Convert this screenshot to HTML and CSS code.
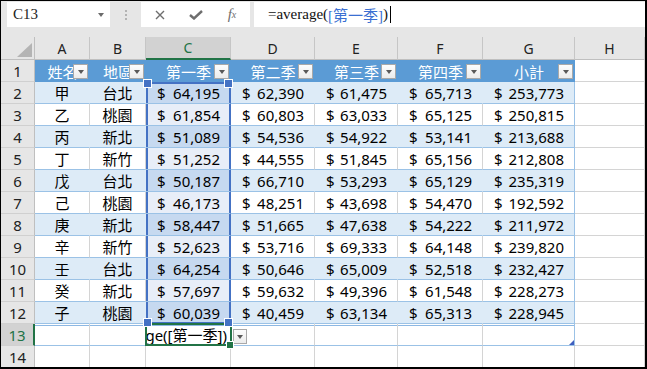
FILE: index.html
```html
<!DOCTYPE html>
<html lang="zh-Hant">
<head>
    <meta charset="UTF-8">
    <meta name="viewport" content="width=device-width, initial-scale=1.0">
    <title>季度業績表</title>
    <link rel="stylesheet" href="styles.css">
</head>
<body>
    <div class="window">
        <!-- formula bar -->
        <div class="formula-bar">
            <div class="name-box">
                <span>C13</span>
                <span class="name-arrow"></span>
            </div>
            <div class="grip">
                <svg width="2" height="10" viewBox="0 0 2 10"><rect x="0" y="0" width="2" height="2" fill="#b3b3b3"/><rect x="0" y="4" width="2" height="2" fill="#b3b3b3"/><rect x="0" y="8" width="2" height="2" fill="#b3b3b3"/></svg>
            </div>
            <div class="fx-buttons">
                <span class="fx-slot">
                    <svg width="10" height="10" viewBox="0 0 10 10"><path d="M1 1 L9 9 M9 1 L1 9" stroke="#6e6e6e" stroke-width="1.4" fill="none"/></svg>
                </span>
                <span class="fx-slot">
                    <svg width="14" height="10" viewBox="0 0 14 10"><path d="M1 5 L5 8.5 L13 1" stroke="#6e6e6e" stroke-width="2.4" fill="none"/></svg>
                </span>
                <span class="fx-slot fx-label">f<sub>x</sub></span>
            </div>
            <div class="formula-input">=average(<span class="ref-text">[第一季]</span>)<span class="cursor"></span></div>
        </div>

        <!-- sheet -->
        <div class="sheet">
            <div class="row">
                <div class="corner"><div class="tri"></div></div>
                <div class="col-head">A</div>
                <div class="col-head">B</div>
                <div class="col-head on">C</div>
                <div class="col-head">D</div>
                <div class="col-head">E</div>
                <div class="col-head">F</div>
                <div class="col-head">G</div>
                <div class="col-head">H</div>
            </div>

            <div class="row">
                <div class="row-head">1</div>
                <div class="th">姓名<span class="filter"></span></div>
                <div class="th">地區<span class="filter"></span></div>
                <div class="th">第一季<span class="filter"></span></div>
                <div class="th">第二季<span class="filter"></span></div>
                <div class="th">第三季<span class="filter"></span></div>
                <div class="th">第四季<span class="filter"></span></div>
                <div class="th">小計<span class="filter"></span></div>
                <div class="cell"></div>
            </div>

            <div class="row band">
                <div class="row-head">2</div>
                <div class="td zh">甲</div>
                <div class="td zh">台北</div>
                <div class="td money ref top"><span>$</span><span>64,195</span></div>
                <div class="td money"><span>$</span><span>62,390</span></div>
                <div class="td money"><span>$</span><span>61,475</span></div>
                <div class="td money"><span>$</span><span>65,713</span></div>
                <div class="td money last"><span>$</span><span>253,773</span></div>
                <div class="cell"></div>
            </div>

            <div class="row">
                <div class="row-head">3</div>
                <div class="td zh">乙</div>
                <div class="td zh">桃園</div>
                <div class="td money ref"><span>$</span><span>61,854</span></div>
                <div class="td money"><span>$</span><span>60,803</span></div>
                <div class="td money"><span>$</span><span>63,033</span></div>
                <div class="td money"><span>$</span><span>65,125</span></div>
                <div class="td money last"><span>$</span><span>250,815</span></div>
                <div class="cell"></div>
            </div>

            <div class="row band">
                <div class="row-head">4</div>
                <div class="td zh">丙</div>
                <div class="td zh">新北</div>
                <div class="td money ref"><span>$</span><span>51,089</span></div>
                <div class="td money"><span>$</span><span>54,536</span></div>
                <div class="td money"><span>$</span><span>54,922</span></div>
                <div class="td money"><span>$</span><span>53,141</span></div>
                <div class="td money last"><span>$</span><span>213,688</span></div>
                <div class="cell"></div>
            </div>

            <div class="row">
                <div class="row-head">5</div>
                <div class="td zh">丁</div>
                <div class="td zh">新竹</div>
                <div class="td money ref"><span>$</span><span>51,252</span></div>
                <div class="td money"><span>$</span><span>44,555</span></div>
                <div class="td money"><span>$</span><span>51,845</span></div>
                <div class="td money"><span>$</span><span>65,156</span></div>
                <div class="td money last"><span>$</span><span>212,808</span></div>
                <div class="cell"></div>
            </div>

            <div class="row band">
                <div class="row-head">6</div>
                <div class="td zh">戊</div>
                <div class="td zh">台北</div>
                <div class="td money ref"><span>$</span><span>50,187</span></div>
                <div class="td money"><span>$</span><span>66,710</span></div>
                <div class="td money"><span>$</span><span>53,293</span></div>
                <div class="td money"><span>$</span><span>65,129</span></div>
                <div class="td money last"><span>$</span><span>235,319</span></div>
                <div class="cell"></div>
            </div>

            <div class="row">
                <div class="row-head">7</div>
                <div class="td zh">己</div>
                <div class="td zh">桃園</div>
                <div class="td money ref"><span>$</span><span>46,173</span></div>
                <div class="td money"><span>$</span><span>48,251</span></div>
                <div class="td money"><span>$</span><span>43,698</span></div>
                <div class="td money"><span>$</span><span>54,470</span></div>
                <div class="td money last"><span>$</span><span>192,592</span></div>
                <div class="cell"></div>
            </div>

            <div class="row band">
                <div class="row-head">8</div>
                <div class="td zh">庚</div>
                <div class="td zh">新北</div>
                <div class="td money ref"><span>$</span><span>58,447</span></div>
                <div class="td money"><span>$</span><span>51,665</span></div>
                <div class="td money"><span>$</span><span>47,638</span></div>
                <div class="td money"><span>$</span><span>54,222</span></div>
                <div class="td money last"><span>$</span><span>211,972</span></div>
                <div class="cell"></div>
            </div>

            <div class="row">
                <div class="row-head">9</div>
                <div class="td zh">辛</div>
                <div class="td zh">新竹</div>
                <div class="td money ref"><span>$</span><span>52,623</span></div>
                <div class="td money"><span>$</span><span>53,716</span></div>
                <div class="td money"><span>$</span><span>69,333</span></div>
                <div class="td money"><span>$</span><span>64,148</span></div>
                <div class="td money last"><span>$</span><span>239,820</span></div>
                <div class="cell"></div>
            </div>

            <div class="row band">
                <div class="row-head">10</div>
                <div class="td zh">壬</div>
                <div class="td zh">台北</div>
                <div class="td money ref"><span>$</span><span>64,254</span></div>
                <div class="td money"><span>$</span><span>50,646</span></div>
                <div class="td money"><span>$</span><span>65,009</span></div>
                <div class="td money"><span>$</span><span>52,518</span></div>
                <div class="td money last"><span>$</span><span>232,427</span></div>
                <div class="cell"></div>
            </div>

            <div class="row">
                <div class="row-head">11</div>
                <div class="td zh">癸</div>
                <div class="td zh">新北</div>
                <div class="td money ref"><span>$</span><span>57,697</span></div>
                <div class="td money"><span>$</span><span>59,632</span></div>
                <div class="td money"><span>$</span><span>49,396</span></div>
                <div class="td money"><span>$</span><span>61,548</span></div>
                <div class="td money last"><span>$</span><span>228,273</span></div>
                <div class="cell"></div>
            </div>

            <div class="row band">
                <div class="row-head">12</div>
                <div class="td zh">子</div>
                <div class="td zh">桃園</div>
                <div class="td money ref bottom"><span>$</span><span>60,039</span></div>
                <div class="td money"><span>$</span><span>40,459</span></div>
                <div class="td money"><span>$</span><span>63,134</span></div>
                <div class="td money"><span>$</span><span>65,313</span></div>
                <div class="td money last"><span>$</span><span>228,945</span></div>
                <div class="cell"></div>
            </div>

            <div class="row total">
                <div class="row-head on">13</div>
                <div class="td"></div>
                <div class="td"></div>
                <div class="td edit"><div class="clip">=average([第一季])</div></div>
                <div class="td has-drop"><span class="drop-btn"></span></div>
                <div class="td"></div>
                <div class="td"></div>
                <div class="td last resize"></div>
                <div class="cell"></div>
            </div>

            <div class="row">
                <div class="row-head">14</div>
                <div class="cell"></div>
                <div class="cell"></div>
                <div class="cell"></div>
                <div class="cell"></div>
                <div class="cell"></div>
                <div class="cell"></div>
                <div class="cell"></div>
                <div class="cell"></div>
            </div>
        </div>
    </div>
</body>
</html>
```

FILE: styles.css
```css
/* Basic reset */
* {
    margin: 0;
    padding: 0;
    box-sizing: border-box;
}

body {
    font-family: "Noto Sans", "Noto Sans CJK TC", sans-serif;
    background-color: #fff;
}

.window {
    width: 647px;
    height: 369px;
    border-style: solid;
    border-color: #000;
    border-width: 1px 2px 2px 1px;
    background-color: #e6e6e6;
    overflow: hidden;
}

/* Formula bar */
.formula-bar {
    display: flex;
    align-items: flex-start;
    height: 36px;
    padding: 1px 0 0 6px;
}

.name-box {
    width: 103px;
    height: 25px;
    background-color: #fff;
    display: flex;
    align-items: center;
    justify-content: space-between;
    padding: 0 6px;
    font: 15px "Liberation Serif", serif;
    color: #222;
}

.name-arrow {
    width: 0;
    height: 0;
    border-left: 3.5px solid transparent;
    border-right: 3.5px solid transparent;
    border-top: 4px solid #6b6b6b;
}

.grip {
    width: 31px;
    height: 25px;
    display: flex;
    align-items: center;
    justify-content: center;
}

.grip svg {
    display: block;
}

.fx-buttons {
    width: 109px;
    height: 25px;
    background-color: #fff;
    display: flex;
    align-items: center;
    padding-left: 1px;
}

.fx-slot {
    width: 36px;
    display: flex;
    justify-content: center;
    align-items: center;
}

.fx-slot svg {
    display: block;
}

.fx-label {
    font: italic 15px "Liberation Serif", serif;
    color: #6e6e6e;
}

.fx-label sub {
    font-size: 10px;
    vertical-align: -1px;
}

.formula-input {
    flex: 1;
    margin-left: 4px;
    height: 25px;
    background-color: #fff;
    display: flex;
    align-items: center;
    padding-left: 14px;
    font: 15px "Liberation Serif", "Noto Sans CJK TC", serif;
    color: #111;
    white-space: pre;
}

.ref-text {
    color: #3a6fd2;
}

.cursor {
    width: 1px;
    height: 17px;
    margin-left: 2px;
    background-color: #000;
}

/* Sheet grid */
.sheet {
    display: grid;
    grid-template-columns: 34px 55px 56px 85px 84px 83px 85px 92px 1fr;
    grid-template-rows: 23px;
    grid-auto-rows: 22px;
    background-color: #fff;
}

.row {
    display: contents;
}

.corner {
    background-color: #e6e6e6;
    border-right: 1px solid #bfbfbf;
    border-bottom: 1px solid #bfbfbf;
    display: flex;
    justify-content: flex-end;
    align-items: flex-end;
    padding: 0 2px 2px 0;
}

.tri {
    width: 15px;
    height: 14px;
    background-color: #b4b4b4;
    clip-path: polygon(100% 0, 100% 100%, 0 100%);
}

.col-head {
    background-color: #e6e6e6;
    border-right: 1px solid #c6c6c6;
    border-bottom: 1px solid #bfbfbf;
    display: flex;
    align-items: center;
    justify-content: center;
    font-size: 14px;
    color: #222;
}

.col-head.on {
    background-color: #d2d2d2;
    color: #217346;
    border-bottom: 2px solid #217346;
}

.row-head {
    background-color: #e6e6e6;
    border-right: 1px solid #bfbfbf;
    border-bottom: 1px solid #d0d0d0;
    display: flex;
    align-items: center;
    justify-content: center;
    font-size: 15px;
    color: #222;
}

.row-head.on {
    background-color: #d2d2d2;
    color: #217346;
    border-right: 2px solid #217346;
}

.cell {
    background-color: #fff;
    border-right: 1px solid #d4d4d4;
    border-bottom: 1px solid #d4d4d4;
}

/* Table header */
.th {
    position: relative;
    background-color: #5b9bd5;
    color: #fff;
    display: flex;
    align-items: center;
    justify-content: center;
    font-size: 15px;
}

.filter,
.drop-btn {
    width: 15px;
    height: 15px;
    background: linear-gradient(#fdfdfd, #ececec);
    border: 1px solid #a9a9a9;
    display: flex;
    align-items: center;
    justify-content: center;
}

.filter {
    position: absolute;
    right: 2px;
    top: 4px;
}

.filter::after,
.drop-btn::after {
    content: "";
    border-left: 3.5px solid transparent;
    border-right: 3.5px solid transparent;
    border-top: 4px solid #595959;
    margin-top: 1px;
}

/* Table body */
.td {
    background-color: #fff;
    border-right: 1px solid #d4d4d4;
    border-bottom: 1px solid #9bc2e6;
    display: flex;
    align-items: center;
    font-size: 15px;
    color: #000;
}

.band .td {
    background-color: #ddebf7;
    border-right-color: #ddebf7;
}

.td.last,
.band .td.last {
    border-right-color: #9bc2e6;
}

.td.zh {
    justify-content: center;
}

.td.money {
    justify-content: space-between;
    padding: 0 10px 0 11px;
}

/* referenced range C2:C12 */
.td.ref {
    background-color: #e8eef8;
    box-shadow: inset 2px 0 #4472c4, inset -1px 0 #4472c4;
}

.band .td.ref {
    background-color: #c6d9f0;
}

.sheet .td.ref {
    border-right-color: #4472c4;
}

.td.ref.top {
    position: relative;
    box-shadow: inset 2px 0 #4472c4, inset -1px 0 #4472c4, inset 0 2px #4472c4;
}

.td.ref.bottom {
    position: relative;
    border-bottom-color: #4472c4;
    box-shadow: inset 2px 0 #4472c4, inset -1px 0 #4472c4, inset 0 -1px #4472c4;
}

.ref.top::before,
.ref.top::after,
.ref.bottom::before,
.ref.bottom::after {
    content: "";
    position: absolute;
    width: 7px;
    height: 7px;
    background-color: #4472c4;
    border: 1px solid #fff;
    z-index: 3;
}

.ref.top::before {
    left: -3px;
    top: -3px;
}

.ref.top::after {
    right: -3px;
    top: -3px;
}

.ref.bottom::before {
    left: -3px;
    bottom: -4px;
}

.ref.bottom::after {
    right: -3px;
    bottom: -4px;
}

/* row 13 */
.total .td {
    box-shadow: inset 0 1px #fff, inset 0 2px #8db8e3;
}

.td.edit {
    position: relative;
}

.edit::before {
    content: "";
    position: absolute;
    top: -1px;
    left: -1px;
    right: -2px;
    bottom: -1px;
    border: 2px solid #217346;
    z-index: 2;
}

.edit::after {
    content: "";
    position: absolute;
    right: -4px;
    bottom: -4px;
    width: 6px;
    height: 6px;
    background-color: #217346;
    border: 1px solid #fff;
    z-index: 2;
}

.edit .clip {
    width: 100%;
    overflow: hidden;
    display: flex;
    justify-content: flex-end;
    white-space: nowrap;
    padding-right: 3px;
}

.td.has-drop {
    align-items: flex-start;
    padding: 5px 0 0 2px;
}

.drop-btn {
    width: 14px;
}

.td.resize {
    position: relative;
}

.resize::after {
    content: "";
    position: absolute;
    right: 0;
    bottom: 0;
    width: 5px;
    height: 5px;
    background-color: #3f5fbf;
    clip-path: polygon(100% 0, 100% 100%, 0 100%);
}
```
